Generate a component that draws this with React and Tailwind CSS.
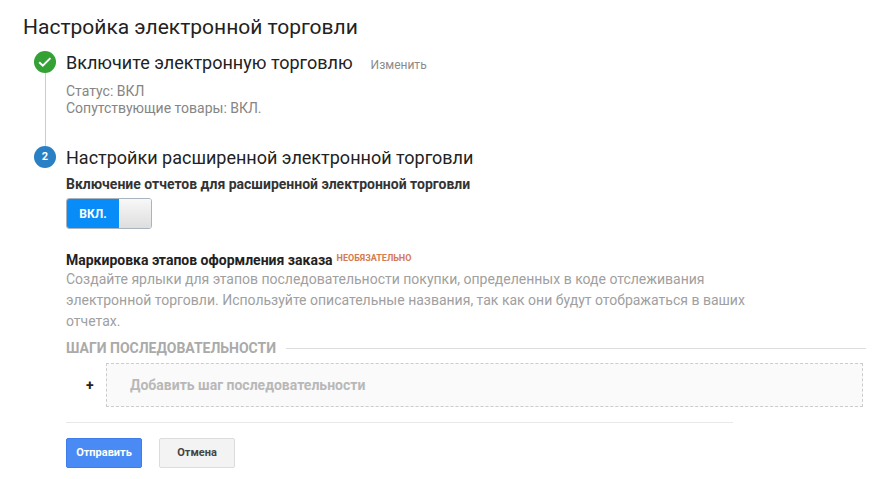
import { useState } from "react";

function App() {
  const [enabled, setEnabled] = useState(true);

  return (
    <main className="min-h-screen bg-white font-[Roboto,sans-serif] text-[14px] text-[#222] pt-[13px] pb-2 pr-2">
      <h1 className="pl-[23px] text-[21px] leading-7 mb-[10px]">
        Настройка электронной торговли
      </h1>

      <ol className="pl-[34px]">
        {/* STEP 1 */}
        <li className="flex gap-[10px]">
          <div className="flex flex-col items-center shrink-0">
            <StepDone />
            <div className="w-px grow bg-[#ccc]" />
          </div>
          <div className="grow min-w-0 pb-[29px]">
            <div className="flex items-baseline gap-[18px]">
              <h2 className="text-[18px] leading-6">Включите электронную торговлю</h2>
              <a href="#edit" className="text-[12px] text-[#8a8a8a]">Изменить</a>
            </div>
            <p className="mt-2 leading-[17px] text-[#858585]">
              Статус: ВКЛ
              <br />
              Сопутствующие товары: ВКЛ.
            </p>
          </div>
        </li>

        {/* STEP 2 */}
        <li className="flex gap-[10px]">
          <div className="flex items-center justify-center shrink-0 size-[22px] rounded-full bg-[#2a80c5] text-[11px] font-bold text-white">
            2
          </div>
          <div className="grow min-w-0">
            <h2 className="text-[18px] leading-6">Настройки расширенной электронной торговли</h2>

            <h3 id="reports" className="mt-[5px] leading-[18px] font-bold text-[#333]">
              Включение отчетов для расширенной электронной торговли
            </h3>
            <Toggle checked={enabled} onChange={setEnabled} />

            <div className="mt-[22px] flex items-start gap-1 leading-[18px]">
              <h3 className="font-bold">Маркировка этапов оформления заказа</h3>
              <span className="text-[9px] leading-[14px] font-bold text-[#d67a50]">НЕОБЯЗАТЕЛЬНО</span>
            </div>
            <p className="max-w-[690px] leading-[21px] text-[#a0a0a0]">
              Создайте ярлыки для этапов последовательности покупки, определенных в коде отслеживания
              электронной торговли. Используйте описательные названия, так как они будут отображаться в ваших
              отчетах.
            </p>

            <div className="mt-[7px] flex items-center gap-[10px]">
              <h4 className="leading-[18px] font-bold text-[#aaa]">ШАГИ ПОСЛЕДОВАТЕЛЬНОСТИ</h4>
              <div className="grow h-px bg-[#ddd]" />
            </div>

            <div className="mt-[6px] flex items-center pr-[3px]">
              <span className="w-10 pl-[20px] font-bold">+</span>
              <button
                type="button"
                className="grow h-11 pl-[23px] text-left font-bold text-[#b8b8b8] bg-[#fafafa] border border-dashed border-[#ccc]"
              >
                Добавить шаг последовательности
              </button>
            </div>

            <hr className="mt-[15px] max-w-[667px] border-[#e8e8e8]" />

            <div className="mt-[15px] flex gap-[17px]">
              <button
                type="button"
                className="w-[76px] h-[30px] rounded-[2px] border border-[#3f7ee8] bg-[#4a8af4] text-[11px] font-bold text-white"
              >
                Отправить
              </button>
              <button
                type="button"
                className="w-[76px] h-[30px] rounded-[2px] border border-[#dcdcdc] bg-[#f3f3f3] text-[11px] font-bold text-[#444]"
              >
                Отмена
              </button>
            </div>
          </div>
        </li>
      </ol>
    </main>
  );
}

/* ================= DONE ICON ================= */

function StepDone() {
  return (
    <svg width="22" height="22" viewBox="0 0 22 22" aria-hidden="true">
      <circle cx="11" cy="11" r="11" fill="#34a135" />
      <path d="M5.2 11.2l3.6 3.5 7.6-7.6" fill="none" stroke="#fff" strokeWidth="2" />
    </svg>
  );
}

/* ================= TOGGLE ================= */

function Toggle({ checked, onChange }) {
  return (
    <label className="mt-[5px] flex w-[86px] h-[31px] overflow-hidden rounded-[3px] border border-[#b5b5b5] has-checked:border-[#a9b4be] cursor-pointer">
      <input
        type="checkbox"
        role="switch"
        aria-labelledby="reports"
        checked={checked}
        onChange={(e) => onChange(e.target.checked)}
        className="sr-only"
      />
      <span
        className={
          checked
            ? "grow flex items-center justify-center bg-[#078cf8] text-[12px] font-bold text-white"
            : "grow order-2 flex items-center justify-center bg-[#eee] text-[12px] font-bold text-[#777]"
        }
      >
        {checked ? "ВКЛ." : "ВЫКЛ."}
      </span>
      <span className="w-8 bg-linear-to-b from-[#f8f8f8] to-[#dedede]" />
    </label>
  );
}

export default App;
